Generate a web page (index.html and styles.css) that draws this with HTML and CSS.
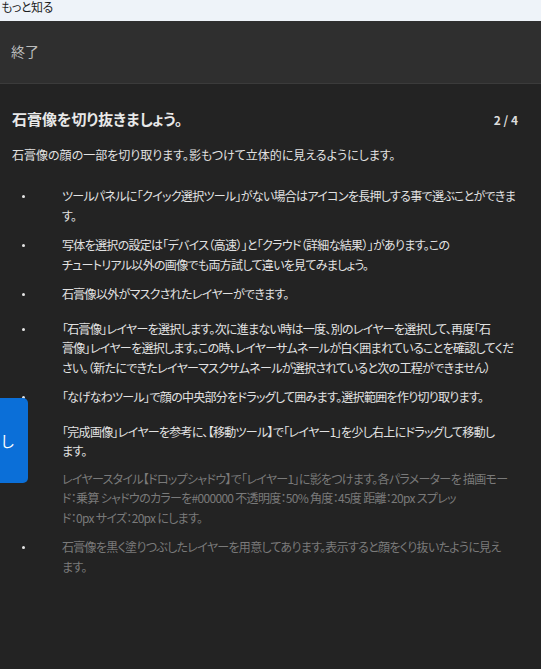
FILE: index.html
```html
<!DOCTYPE html>
<html lang="ja">
<head>
    <meta charset="UTF-8">
    <title>チュートリアル</title>
    <link rel="stylesheet" href="styles.css">
</head>
<body>
    <div class="topbar">もっと知る</div>

    <div class="header">
        <span class="exit">終了</span>
    </div>

    <div class="content">
        <div class="title-row">
            <h1>石膏像を切り抜きましょう。</h1>
            <span class="step-count">2 / 4</span>
        </div>
        <p class="lead">石膏像の顔の一部を切り取ります。影もつけて立体的に見えるようにします。</p>

        <ul class="steps">
            <li><span class="dot"></span><span class="text">ツールパネルに「クイック選択ツール」がない場合はアイコンを長押しする事で選ぶことができま<br>す。</span></li>
            <li><span class="dot"></span><span class="text">写体を選択の設定は「デバイス（高速）」と「クラウド（詳細な結果）」があります。この<br>チュートリアル以外の画像でも両方試して違いを見てみましょう。</span></li>
            <li><span class="dot"></span><span class="text">石膏像以外がマスクされたレイヤーができます。</span></li>
            <li class="wide"><span class="dot"></span><span class="text">「石膏像」レイヤーを選択します。次に進まない時は一度、別のレイヤーを選択して、再度「石<br>膏像」レイヤーを選択します。この時、レイヤーサムネールが白く囲まれていることを確認してくだ<br>さい。（新たにできたレイヤーマスクサムネールが選択されていると次の工程ができません）</span></li>
            <li><span class="dot"></span><span class="text">「なげなわツール」で顔の中央部分をドラッグして囲みます。選択範囲を作り切り取ります。</span></li>
            <li class="wide tight"><span class="dot"></span><span class="text">「完成画像」レイヤーを参考に、【移動ツール】で「レイヤー1」を少し右上にドラッグして移動し<br>ます。</span></li>
            <li class="muted"><span class="dot"></span><span class="text">レイヤースタイル【ドロップシャドウ】で「レイヤー1」に影をつけます。各パラメーターを 描画モー<br>ド：乗算 シャドウのカラーを#000000 不透明度：50% 角度：45度 距離：20px スプレッ<br>ド：0px サイズ：20px にします。</span></li>
            <li class="muted"><span class="dot"></span><span class="text">石膏像を黒く塗りつぶしたレイヤーを用意してあります。表示すると顔をくり抜いたように見え<br>ます。</span></li>
        </ul>
    </div>

    <button class="side-btn">し</button>
</body>
</html>
```

FILE: styles.css
```css
body {
    margin: 0;
    background: #232323;
    color: #e2e2e2;
    font-family: "Noto Sans CJK JP", "Noto Sans", sans-serif;
    font-feature-settings: "palt";
    min-height: 100vh;
}
.topbar {
    height: 21px;
    padding-left: 1px;
    background: #eef3f9;
    color: #1e1e1e;
    font-size: 12px;
    line-height: 13px;
    letter-spacing: -0.5px;
}
.header {
    background: #2f2f2f;
    border-bottom: 1px solid #3b3b3b;
    display: flex;
    align-items: center;
    padding: 0 11px 3px;
    height: 59px;
}
.exit {
    font-size: 14px;
    color: #bcbcbc;
}
.content {
    padding: 24px 22px 40px 12px;
}
.title-row {
    display: flex;
    justify-content: space-between;
    align-items: center;
}
h1 {
    margin: 0;
    font-size: 15px;
    line-height: 22px;
    font-weight: 700;
    color: #e8e8e8;
}
.step-count {
    font-size: 12px;
    font-weight: 700;
    color: #dcdcdc;
    padding-right: 1px;
}
.lead {
    margin: 15px 0 0;
    font-size: 12px;
    line-height: 19.2px;
}
.steps {
    list-style: none;
    margin: 22px -14px 0 0;
    padding: 0;
}
.steps li {
    display: flex;
    font-size: 12px;
    line-height: 19.5px;
    margin-bottom: 10px;
}
.steps li.wide {
    margin-top: 15px;
}
.steps li.tight {
    margin-bottom: 8px;
}
.steps li.muted {
    color: #7a7a7a;
}
.dot {
    flex: 0 0 50px;
    position: relative;
}
.dot::before {
    content: "";
    position: absolute;
    left: 10px;
    top: 9px;
    width: 3px;
    height: 3px;
    border-radius: 50%;
    background: #e6e6e6;
}
.text {
    flex: 1;
    letter-spacing: -0.7px;
}
.side-btn {
    position: absolute;
    left: 0;
    top: 398px;
    width: 28px;
    height: 85px;
    border: none;
    border-radius: 0 5px 5px 0;
    background: #0b6fd8;
    color: #fff;
    font-family: inherit;
    font-size: 15px;
    text-align: left;
    padding: 0;
}
```
